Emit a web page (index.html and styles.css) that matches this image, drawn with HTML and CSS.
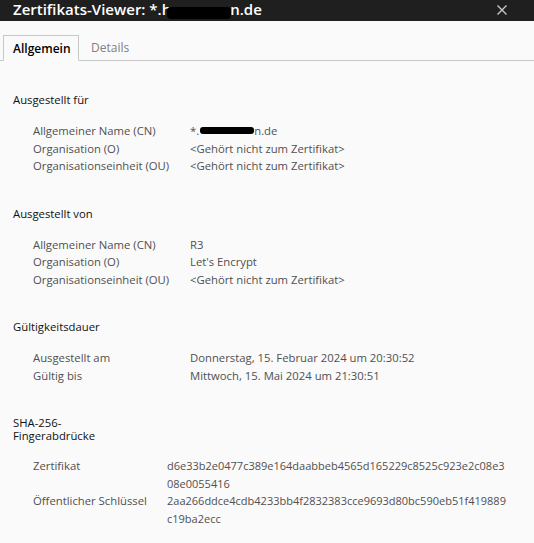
FILE: index.html
```html
<!DOCTYPE html>
<html lang="de">
<head>
<meta charset="utf-8">
<title>Zertifikats-Viewer</title>
<link rel="stylesheet" href="styles.css">
</head>
<body>
<div class="window">
  <header class="titlebar">
    <h1 class="title">Zertifikats-Viewer: *.h<span class="redact redact-title"></span>n.de</h1>
    <svg class="close" width="10" height="10" viewBox="0 0 10 10" aria-label="Schließen">
      <path d="M0.5 0.5 L9.5 9.5 M9.5 0.5 L0.5 9.5" stroke="#c8c8c8" stroke-width="1.4" fill="none"/>
    </svg>
  </header>
  <nav class="tabs">
    <span class="tab active">Allgemein</span>
    <span class="tab">Details</span>
  </nav>
  <main class="content">
    <section class="section">
      <h2 class="heading">Ausgestellt für</h2>
      <dl class="rows">
        <dt>Allgemeiner Name (CN)</dt><dd>*.<span class="redact redact-row"></span>n.de</dd>
        <dt>Organisation (O)</dt><dd>&lt;Gehört nicht zum Zertifikat&gt;</dd>
        <dt>Organisationseinheit (OU)</dt><dd>&lt;Gehört nicht zum Zertifikat&gt;</dd>
      </dl>
    </section>
    <section class="section">
      <h2 class="heading">Ausgestellt von</h2>
      <dl class="rows">
        <dt>Allgemeiner Name (CN)</dt><dd>R3</dd>
        <dt>Organisation (O)</dt><dd>Let's Encrypt</dd>
        <dt>Organisationseinheit (OU)</dt><dd>&lt;Gehört nicht zum Zertifikat&gt;</dd>
      </dl>
    </section>
    <section class="section">
      <h2 class="heading">Gültigkeitsdauer</h2>
      <dl class="rows">
        <dt>Ausgestellt am</dt><dd>Donnerstag, 15. Februar 2024 um 20:30:52</dd>
        <dt>Gültig bis</dt><dd>Mittwoch, 15. Mai 2024 um 21:30:51</dd>
      </dl>
    </section>
    <section class="section">
      <h2 class="heading narrow">SHA-256-Fingerabdrücke</h2>
      <dl class="rows hashes">
        <dt>Zertifikat</dt><dd>d6e33b2e0477c389e164daabbeb4565d165229c8525c923e2c08e308e0055416</dd>
        <dt>Öffentlicher Schlüssel</dt><dd>2aa266ddce4cdb4233bb4f2832383cce9693d80bc590eb51f419889c19ba2ecc</dd>
      </dl>
    </section>
  </main>
</div>
</body>
</html>
```

FILE: styles.css
```css
* { box-sizing: border-box; }
html, body { margin: 0; padding: 0; }
body {
  width: 534px;
  height: 543px;
  overflow: hidden;
  background: #fafafa;
  font-family: "Open Sans", "Noto Sans", sans-serif;
  font-size: 11px;
  color: #505050;
}
.window { display: flex; flex-direction: column; height: 543px; }
.titlebar {
  height: 21px;
  background: #1f1f1f;
  display: flex;
  align-items: center;
  justify-content: space-between;
  padding: 0 27px 2px 13px;
}
.title {
  margin: 0;
  font-size: 15px;
  font-weight: 600;
  color: #fff;
  line-height: 19px;
  white-space: nowrap;
}
.redact {
  display: inline-block;
  background: #000;
  border-radius: 4px;
}
.redact-title { width: 64px; height: 12px; vertical-align: -4px; margin-left: -4px; margin-right: -1px; }
.redact-row { width: 54px; height: 7px; vertical-align: 1px; margin-left: 1px; border-radius: 3px; }
.close { display: block; }
.tabs {
  margin-top: 14px;
  height: 26px;
  display: flex;
  border-bottom: 1px solid #c8c8c8;
  padding-left: 3px;
}
.tab {
  padding: 0 12px;
  line-height: 25px;
  font-size: 12px;
  color: #808080;
  margin-bottom: -1px;
}
.tab.active {
  color: #000;
  font-weight: 600;
  background: #fafafa;
  border: 1px solid #c8c8c8;
  border-bottom-color: #fafafa;
  padding: 0 9px;
  width: 76px;
}
.content { padding: 32px 13px 0 13px; display: flex; flex-direction: column; gap: 32px; }
.heading {
  margin: 0 0 15px 0;
  font-size: 11.3px;
  font-weight: 400;
  color: #111;
  line-height: 14px;
}
.heading.narrow { width: 92px; line-height: 13px; }
.rows {
  margin: 0;
  padding-left: 20px;
  display: grid;
  grid-template-columns: 157px 1fr;
  line-height: 17.5px;
  font-size: 11.3px;
}
.rows dt, .rows dd { margin: 0; }
.hashes { grid-template-columns: 134px 340px; }
.hashes dd { word-break: break-all; font-size: 11px; }
```
